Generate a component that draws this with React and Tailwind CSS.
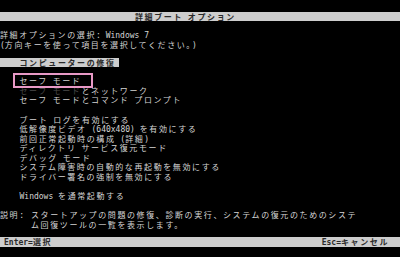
import React from "react";

function T({ s }) {
  const parts = s.split(/([\x00-\x7f]+)/).filter((p) => p.length > 0);
  return (
    <>
      {parts.map((p, i) =>
        /^[\x00-\x7f]+$/.test(p) ? (
          <span key={i} className="font-['DejaVu_Sans_Mono',monospace] tracking-normal whitespace-pre">
            {p}
          </span>
        ) : (
          <span key={i} className="tracking-[1.6px]">
            {p}
          </span>
        )
      )}
    </>
  );
}

function Row({ children, className = "" }) {
  return (
    <div className={"h-[9.5px] leading-[9.5px] whitespace-pre " + className}>{children}</div>
  );
}

export default function App() {
  const items = [
    "ブート ログを有効にする",
    "低解像度ビデオ (640x480) を有効にする",
    "前回正常起動時の構成 (詳細)",
    "ディレクトリ サービス復元モード",
    "デバッグ モード",
    "システム障害時の自動的な再起動を無効にする",
    "ドライバー署名の強制を無効にする",
  ];
  return (
    <div className="relative w-[400px] h-[257px] bg-black overflow-hidden text-[8px] text-[#d4d4d4] font-['Noto_Sans_CJK_JP',sans-serif]">
      <div className="h-[12px]" />
      <div className="h-[9px] leading-[9px] bg-[#cdcdcd] text-[#2a2a2a] font-bold pl-[135px] whitespace-pre">
        <T s="詳細ブート オプション" />
      </div>
      <div className="h-[9.25px]" />
      <Row>
        <T s="詳細オプションの選択: Windows 7" />
      </Row>
      <Row>
        <T s="(方向キーを使って項目を選択してください。)" />
      </Row>
      <div className="h-[8.75px]" />
      <div className="h-[9px] leading-[9px] w-[119px] bg-[#cdcdcd] text-[#2a2a2a] font-bold pl-[19.5px] whitespace-pre">
        <T s="コンピューターの修復" />
      </div>
      <div className="h-[9.25px]" />
      <div className="pl-[19.5px]">
        <Row>
          <T s="セーフ モード" />
        </Row>
        <Row>
          <span className="text-[#4a4a4a]">
            <T s="セーフ モード" />
          </span>
          <T s="とネットワーク" />
        </Row>
        <Row>
          <T s="セーフ モードとコマンド プロンプト" />
        </Row>
        <div className="h-[10px]" />
        {items.map((t) => (
          <Row key={t}>
            <T s={t} />
          </Row>
        ))}
        <div className="h-[9.5px]" />
        <Row>
          <T s="Windows を通常起動する" />
        </Row>
      </div>
      <div className="h-[10px]" />
      <div className="flex">
        <div className="w-[31px] shrink-0 h-[9.5px] leading-[9.5px] whitespace-pre">
          <T s="説明:" />
        </div>
        <div>
          <Row>
            <T s="スタートアップの問題の修復、診断の実行、システムの復元のためのシステ" />
          </Row>
          <Row>
            <T s="ム回復ツールの一覧を表示します。" />
          </Row>
        </div>
      </div>
      <div className="h-[7.75px]" />
      <div className="h-[10px] leading-[10px] bg-[#cdcdcd] text-[#2a2a2a] font-bold flex justify-between pl-[4px] pr-[11px] whitespace-pre">
        <span>
          <T s="Enter=選択" />
        </span>
        <span>
          <T s="Esc=キャンセル" />
        </span>
      </div>
      <div className="absolute left-[13px] top-[73px] w-[80px] h-[15px] border-2 border-[#e899c6]" />
    </div>
  );
}
